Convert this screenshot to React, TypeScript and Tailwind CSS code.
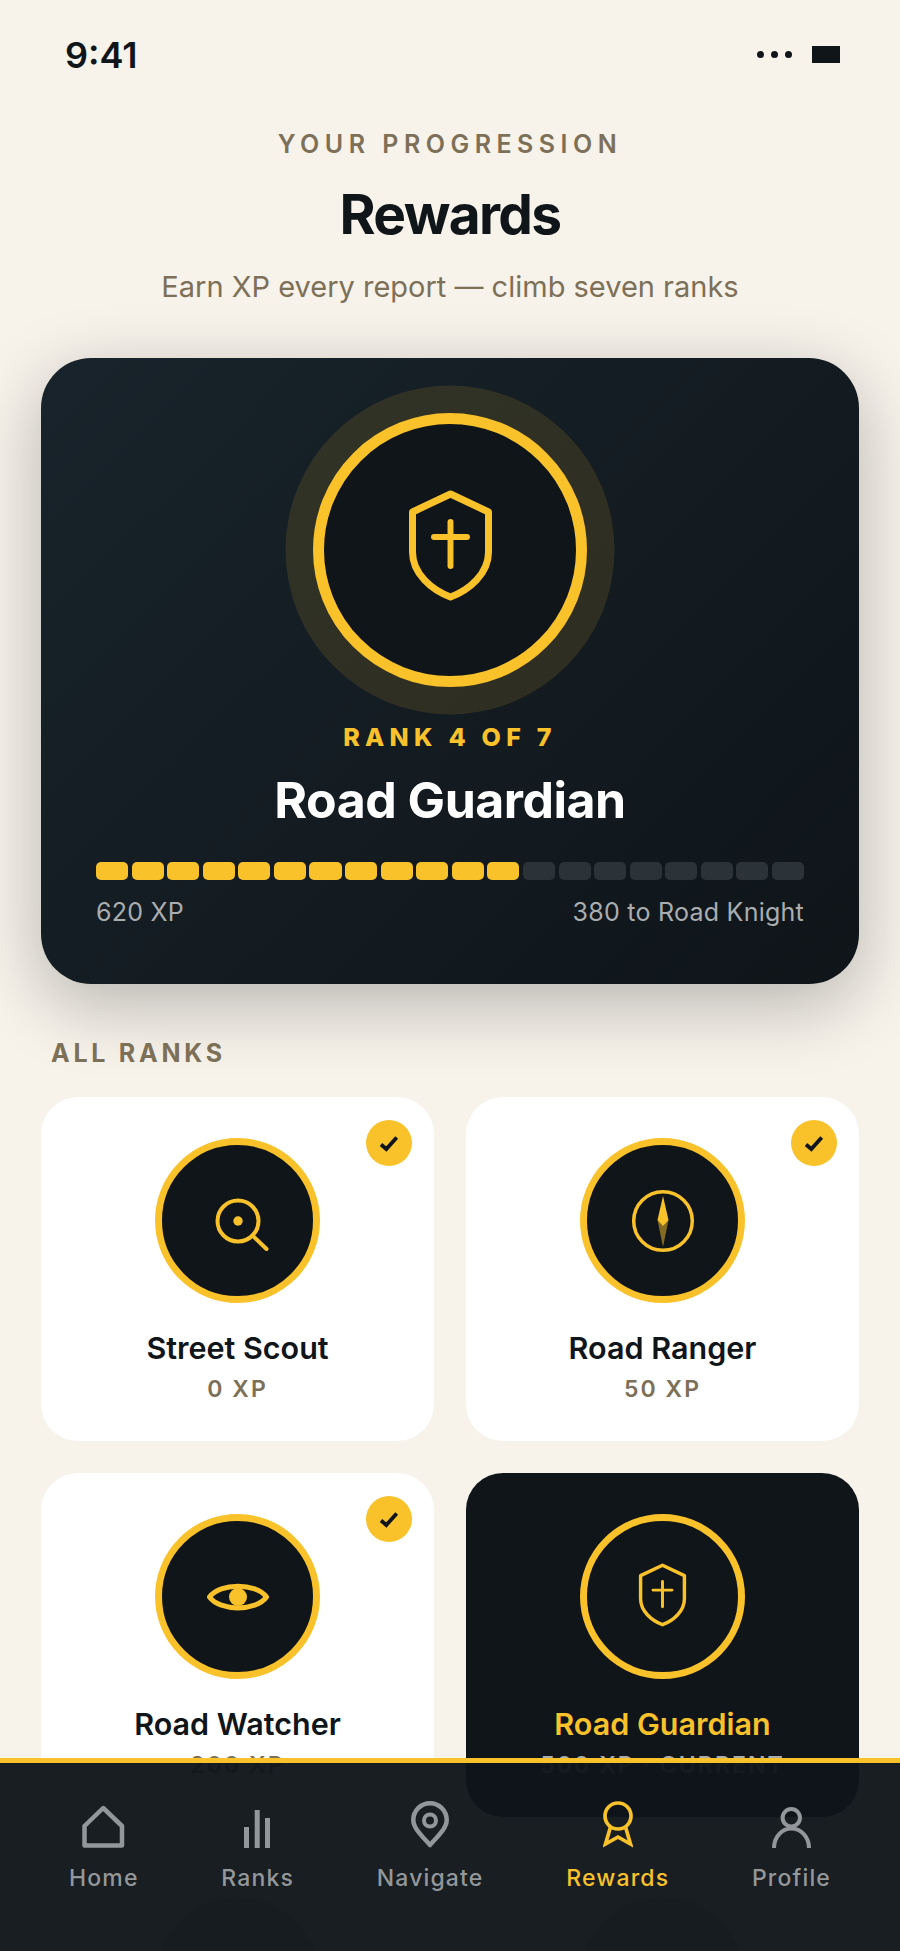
import type { ReactNode } from "react"

const Y = "#f9c12a"

const ShieldIcon = ({ w, h, sw }: { w: number; h: number; sw: number }) => (
  <svg width={w} height={h} viewBox="0 0 83 111" fill="none" stroke={Y} strokeWidth={sw} strokeLinecap="round" strokeLinejoin="round">
    <path d="M41.5 4 L79.5 22 V62 C79.5 84 60 100 41.5 107 C23 100 3.5 84 3.5 62 V22 Z" />
    <path d="M41.5 32 V76 M25 47 H58" strokeWidth={sw * 0.85} />
  </svg>
)

const SearchIcon = () => (
  <svg width="64" height="64" viewBox="-32 -32 64 64" fill="none" stroke={Y} strokeWidth="4" strokeLinecap="round">
    <circle cx="0" cy="0" r="20.5" />
    <circle cx="0" cy="0" r="4.7" fill={Y} stroke="none" />
    <path d="M14.5 14.5 L28.5 28" />
  </svg>
)

const CompassIcon = () => (
  <svg width="64" height="64" viewBox="-32 -32 64 64" fill="none">
    <circle cx="0" cy="0" r="29.3" stroke={Y} strokeWidth="3.5" />
    <polygon points="-5.5,-1 0,26 5.5,-1" fill={Y} opacity="0.5" />
    <polygon points="0,-25 5.5,-1 0,5 -5.5,-1" fill={Y} />
  </svg>
)

const EyeIcon = () => (
  <svg width="64" height="64" viewBox="-32 -32 64 64" fill="none">
    <path d="M-28.5 0 C-18 -14.5 18 -14.5 28.5 0 C18 14.5 -18 14.5 -28.5 0 Z" stroke={Y} strokeWidth="5" strokeLinejoin="round" />
    <circle cx="0" cy="0" r="9" fill={Y} />
  </svg>
)

const CheckBadge = () => (
  <div className="absolute top-[23px] right-[22px] flex h-[46px] w-[46px] items-center justify-center rounded-full bg-[#f9c12a]">
    <svg width="24" height="24" viewBox="-12 -12 24 24" fill="none" stroke="#0f1519" strokeWidth="3.8">
      <path d="M-8 1.5 L-2.7 6 L7.7 -5.5" />
    </svg>
  </div>
)

const RankCircle = ({ children }: { children?: ReactNode }) => (
  <div className="flex h-[165px] w-[165px] items-center justify-center rounded-full border-[7px] border-[#f9c12a] bg-[#0f1519]">
    {children}
  </div>
)

const RankCard = ({ name, xp, icon }: { name: string; xp: string; icon: ReactNode }) => (
  <div className="relative flex h-[344px] flex-col items-center rounded-[37px] bg-white pt-[41px]">
    <CheckBadge />
    <RankCircle>{icon}</RankCircle>
    <div className="mt-[25px] text-[30.5px] leading-[40px] font-semibold text-[#0f1519]">{name}</div>
    <div className="mt-[7px] text-[23px] leading-[28px] font-semibold tracking-[0.09em] text-[#7d7058]">{xp}</div>
  </div>
)

const LockedCard = () => (
  <div className="flex h-[344px] flex-col items-center rounded-[37px] bg-white pt-[48px]">
    <div className="h-[165px] w-[165px] rounded-full border-[3px] border-[#0f1519] bg-[#0f1519] opacity-20" />
  </div>
)

const segments = Array.from({ length: 20 }, (_, i) => i < 12)

const navItems = [
  {
    label: "Home",
    icon: (
      <svg width="43" height="43" viewBox="0 0 43 43" fill="none" stroke="currentColor" strokeWidth="4.5" strokeLinejoin="round">
        <path d="M21.2 3 L40 21 V40.5 H2.5 V21 Z" />
      </svg>
    ),
  },
  {
    label: "Ranks",
    icon: (
      <svg width="27" height="38" viewBox="0 0 27 38" fill="currentColor">
        <rect x="0" y="17" width="5" height="21" />
        <rect x="10.7" y="0" width="5" height="38" />
        <rect x="21" y="8" width="5" height="30" />
      </svg>
    ),
  },
  {
    label: "Navigate",
    icon: (
      <svg width="38" height="47" viewBox="0 0 38 47" fill="none" stroke="currentColor" strokeWidth="4.5" strokeLinejoin="round">
        <path d="M19 44 C10 34 2.3 27 2.3 19 A16.7 16.7 0 0 1 35.7 19 C35.7 27 28 34 19 44 Z" />
        <circle cx="19" cy="19.5" r="6" strokeWidth="4" />
      </svg>
    ),
  },
  {
    label: "Rewards",
    active: true,
    icon: (
      <svg width="30" height="47" viewBox="0 0 30 47" fill="none" stroke="currentColor" strokeWidth="3.7">
        <circle cx="15" cy="15" r="13" />
        <path d="M7.5 26 L2.5 43 L15 36 L27.5 43 L22.5 26" />
      </svg>
    ),
  },
  {
    label: "Profile",
    icon: (
      <svg width="39" height="41" viewBox="0 0 39 41" fill="none" stroke="currentColor" strokeWidth="4">
        <circle cx="19.3" cy="10.7" r="8.7" />
        <path d="M2 41 C2 30 10 21.5 19.3 21.5 C29 21.5 37 30 37 41" />
      </svg>
    ),
  },
]

export default function App() {
  return (
    <div className="relative h-[1951px] w-[900px] overflow-hidden bg-[#f7f2ea] font-['Inter',sans-serif]">
      <div className="flex h-[109px] items-center justify-between pr-[60px] pl-[65px]">
        <span className="text-[36px] font-semibold text-[#0f1519]">9:41</span>
        <div className="flex items-center gap-[20px]">
          <div className="flex gap-[7px]">
            <span className="h-[7px] w-[7px] rounded-full bg-[#0f1519]" />
            <span className="h-[7px] w-[7px] rounded-full bg-[#0f1519]" />
            <span className="h-[7px] w-[7px] rounded-full bg-[#0f1519]" />
          </div>
          <span className="h-[17px] w-[28px] bg-[#0f1519]" />
        </div>
      </div>

      <div className="text-center">
        <div className="mt-[20px] text-[25px] leading-[30px] font-semibold tracking-[0.22em] text-[#7d7058]">YOUR PROGRESSION</div>
        <h1 className="mt-[25px] text-[55px] leading-[60px] font-bold tracking-[-0.03em] text-[#0f1519]">Rewards</h1>
        <p className="mt-[23px] text-[29px] leading-[40px] text-[#7d7058]">Earn XP every report — climb seven ranks</p>
      </div>

      <section className="mx-[41px] mt-[51px] flex flex-col items-center rounded-[50px] bg-[linear-gradient(135deg,#18232b,#0f1519)] px-[55px] pt-[55px] pb-[57px] shadow-[0_20px_70px_rgba(15,21,25,0.28)]">
        <div className="flex h-[274px] w-[274px] items-center justify-center rounded-full border-[11.5px] border-[#f9c12a] bg-[#0f1519] shadow-[0_0_0_27.5px_rgba(249,193,42,0.12)]">
          <div className="-translate-y-[5px]">
            <ShieldIcon w={83} h={111} sw={7} />
          </div>
        </div>
        <div className="mt-[35px] text-[25px] leading-[30px] font-extrabold tracking-[0.21em] text-[#f9c12a]">RANK 4 OF 7</div>
        <h2 className="mt-[20px] text-[50px] leading-[56px] font-bold tracking-[-0.01em] text-white">Road Guardian</h2>
        <div className="mt-[34px] flex w-full gap-[3.5px]">
          {segments.map((on, i) => (
            <div key={i} className={`h-[18px] flex-1 rounded-[5px] ${on ? "bg-[#f9c12a]" : "bg-[#2c3338]"}`} />
          ))}
        </div>
        <div className="mt-[17px] flex w-full justify-between text-[25px] leading-[30px] tracking-[0.01em] text-[#a9adb0]">
          <span>620 XP</span>
          <span>380 to Road Knight</span>
        </div>
      </section>

      <div className="mt-[54px] ml-[51px] text-[25px] leading-[30px] font-bold tracking-[0.15em] text-[#7d7058]">ALL RANKS</div>

      <div className="mx-[41px] mt-[29px] grid grid-cols-2 gap-[32px]">
        <RankCard name="Street Scout" xp="0 XP" icon={<SearchIcon />} />
        <RankCard name="Road Ranger" xp="50 XP" icon={<CompassIcon />} />
        <RankCard name="Road Watcher" xp="200 XP" icon={<EyeIcon />} />
        <div className="flex h-[344px] flex-col items-center rounded-[37px] bg-[#0f1519] pt-[41px]">
          <div className="flex h-[165px] w-[165px] items-center justify-center rounded-full border-[7px] border-[#f9c12a]">
            <div className="-translate-y-[2px]">
              <ShieldIcon w={49} h={64} sw={6} />
            </div>
          </div>
          <div className="mt-[25px] text-[30.5px] leading-[40px] font-semibold text-[#f9c12a]">Road Guardian</div>
          <div className="mt-[7px] text-[23px] leading-[28px] font-semibold tracking-[0.09em] text-[#a9adb0]">500 XP · CURRENT</div>
        </div>
        <LockedCard />
        <LockedCard />
      </div>

      <nav className="absolute inset-x-0 bottom-0 flex h-[193px] items-start justify-between border-t-[5.5px] border-[#f9c12a] bg-[#0f1519]/96 px-[69px]">
        {navItems.map((item) => (
          <div key={item.label} className={`flex flex-col items-center ${item.active ? "text-[#f9c12a]" : "text-[#94979a]"}`}>
            <div className="box-content flex h-[47px] items-end pt-[38px]">{item.icon}</div>
            <div className="mt-[16px] text-[23px] leading-[28px] font-medium tracking-[0.05em]">{item.label}</div>
          </div>
        ))}
      </nav>
    </div>
  )
}
